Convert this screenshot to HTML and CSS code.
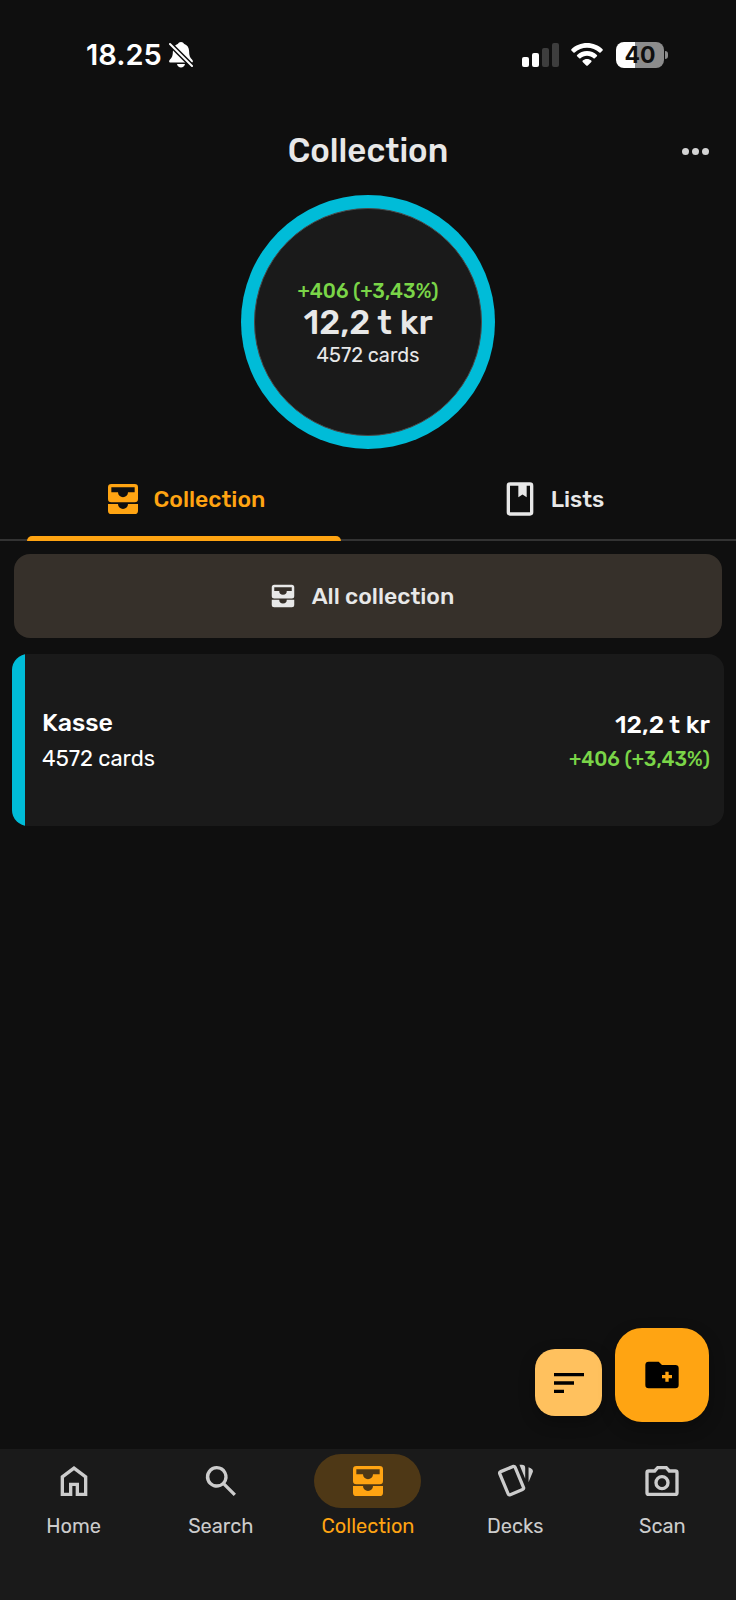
FILE: index.html
```html
<!DOCTYPE html>
<html lang="en">
<head>
<meta charset="utf-8">
<meta name="viewport" content="width=device-width, initial-scale=1">
<title>Collection</title>
<link rel="stylesheet" href="styles.css">
</head>
<body>
<svg class="sprite" aria-hidden="true">
  <symbol id="inbox" viewBox="0 0 24 24"><path fill-rule="evenodd" d="M5 3h14a2 2 0 0 1 2 2v7a2 2 0 0 1-2 2H5a2 2 0 0 1-2-2V5a2 2 0 0 1 2-2zM5 5v3h4a3 3 0 0 0 6 0h4V5zM3 15h6a3 3 0 0 0 6 0h6v4a2 2 0 0 1-2 2H5a2 2 0 0 1-2-2z"/></symbol>
</svg>
<div class="app">
  <div class="status">
    <div class="status-side">
      <span class="time">18.25</span>
      <svg class="bell" viewBox="0 0 24 26"><path d="M12 0c1.500 0 2.500.8 2.900 1.800 3.400 1.200 5.200 3.900 5.200 7.400 0 4.300.8 6.200 2.900 8.300.6.7.9 1.300.9 1.800 0 .8-.6 1.200-1.400 1.200H1.500c-.8 0-1.400-.4-1.400-1.200 0-.5.300-1.100.900-1.800C3.100 15.400 3.900 13.500 3.900 9.200 3.900 5.700 5.700 3 9.100 1.800 9.500.8 10.500 0 12 0zM8 22h8c-.4 2-2 3.500-4 3.500S8.400 24 8 22z"/><path class="slash-gap" d="M1 2 23 24"/><path class="slash" d="M1 2 23 24"/></svg>
    </div>
    <div class="status-side">
      <svg class="signal" viewBox="0 0 37 24"><rect y="14" width="7" height="10" rx="2"/><rect x="10" y="10" width="7" height="14" rx="2"/><rect class="weak" x="20" y="5" width="7" height="19" rx="2"/><rect class="weak" x="30" width="7" height="24" rx="2"/></svg>
      <svg class="wifi" viewBox="0 0 32 24"><path d="M16 0c6 0 11.500 2.300 15.600 6.200.4.400.4.900 0 1.300l-2 2c-.4.400-.9.400-1.300 0C25 6.400 20.700 4.700 16 4.700S7 6.400 3.700 9.500c-.4.400-.9.400-1.300 0l-2-2c-.4-.4-.4-.9 0-1.300C4.500 2.300 10 0 16 0zM16 8c3.800 0 7.300 1.500 9.900 3.900.4.400.4.900 0 1.300l-2.100 2.100c-.4.400-.9.400-1.300 0C20.800 13.700 18.500 12.700 16 12.700s-4.800 1-6.500 2.600c-.4.400-.9.400-1.300 0l-2.100-2.100c-.4-.4-.4-.9 0-1.300C8.700 9.500 12.200 8 16 8zM16 16c1.700 0 3.200.6 4.300 1.600.4.400.4.900 0 1.300l-3.500 3.500c-.5.500-1.100.5-1.600 0l-3.500-3.500c-.4-.4-.4-.9 0-1.300C12.800 16.600 14.300 16 16 16z"/></svg>
      <span class="battery-wrap"><span class="battery">40</span><span class="nub"></span></span>
    </div>
  </div>

  <header class="header">
    <h1 class="title">Collection</h1>
    <button class="more" type="button" aria-label="More options"><svg viewBox="0 0 27 7"><circle cx="3.500" cy="3.500" r="3.500"/><circle cx="13.500" cy="3.500" r="3.500"/><circle cx="23.500" cy="3.500" r="3.500"/></svg></button>
  </header>

  <section class="ring">
    <div class="ring-inner">
      <span class="gain">+406 (+3,43%)</span>
      <strong class="total">12,2 t kr</strong>
      <span class="count">4572 cards</span>
    </div>
  </section>

  <div class="tabs" role="tablist">
    <button class="tab tab-active" type="button" role="tab" aria-selected="true"><svg class="icon"><use href="#inbox"/></svg>Collection</button>
    <button class="tab" type="button" role="tab" aria-selected="false"><svg class="icon" viewBox="0 0 24 24"><path fill-rule="evenodd" d="M6 2h12a2 2 0 0 1 2 2v16a2 2 0 0 1-2 2H6a2 2 0 0 1-2-2V4a2 2 0 0 1 2-2zM6 4v16h12V4h-2v7l-2.500-1.700L11 11V4z"/></svg>Lists</button>
  </div>

  <main class="content">
    <button class="all" type="button"><svg class="icon icon-small"><use href="#inbox"/></svg>All collection</button>
    <a class="card" href="#kasse">
      <span class="card-col">
        <span class="card-name">Kasse</span>
        <span class="card-count">4572 cards</span>
      </span>
      <span class="card-col card-end">
        <span class="card-value">12,2 t kr</span>
        <span class="gain">+406 (+3,43%)</span>
      </span>
    </a>
  </main>

  <div class="actions">
    <button class="fab fab-small" type="button" aria-label="Sort"><svg class="icon" viewBox="0 0 24 24"><path d="M3 6h18v2H3zM3 11h12v2H3zM3 16h6v2H3z"/></svg></button>
    <button class="fab" type="button" aria-label="New folder"><svg class="icon" viewBox="0 0 24 24"><path fill-rule="evenodd" d="M4 4h6l2 2h8a2 2 0 0 1 2 2v10a2 2 0 0 1-2 2H4a2 2 0 0 1-2-2V6a2 2 0 0 1 2-2zM14 10v2h-2v2h2v2h2v-2h2v-2h-2v-2z"/></svg></button>
  </div>

  <nav class="nav">
    <a class="nav-item" href="#home"><span class="pill"><svg class="icon" viewBox="0 0 24 24"><path d="M6 19h3v-6h6v6h3v-9l-6-4.500L6 10zM4 21V9l8-6 8 6v12h-7v-6h-2v6z"/></svg></span>Home</a>
    <a class="nav-item" href="#search"><span class="pill"><svg class="icon" viewBox="0 0 24 24"><path fill-rule="evenodd" d="M9.500 3a6.500 6.500 0 0 1 5.200 10.300l6.300 6.300-1.400 1.400-6.300-6.300A6.500 6.500 0 1 1 9.500 3zm0 2a4.500 4.500 0 1 0 0 9 4.500 4.500 0 0 0 0-9z"/></svg></span>Search</a>
    <a class="nav-item nav-active" href="#collection" aria-current="page"><span class="pill"><svg class="icon"><use href="#inbox"/></svg></span>Collection</a>
    <a class="nav-item" href="#decks"><span class="pill"><svg class="icon" viewBox="0 0 24 24"><path fill-rule="evenodd" d="M11.190 2.250c-.26 0-.52.06-.77.150L3.060 5.450a2 2 0 0 0-1.090 2.600L6.930 20a2 2 0 0 0 2.600 1.100l7.370-3.050a2 2 0 0 0 1.100-2.600L13 3.500a2 2 0 0 0-1.810-1.250zm0 1.970 4.980 12.020-7.390 3.060L3.800 7.290zM14.670 2.250l3.450 8.350V4.250a2 2 0 0 0-2-2zM20.130 3.790v9.030l2.430-5.860a2 2 0 0 0-1.090-2.600z"/></svg></span>Decks</a>
    <a class="nav-item" href="#scan"><span class="pill"><svg class="icon" viewBox="0 0 24 24"><path fill-rule="evenodd" d="M20 5h-3.170L15 3H9L7.170 5H4a2 2 0 0 0-2 2v12a2 2 0 0 0 2 2h16a2 2 0 0 0 2-2V7a2 2 0 0 0-2-2zm0 14H4V7h4.050l1.830-2h4.240l1.830 2H20zM12 8.400a4.600 4.600 0 1 0 0 9.200 4.600 4.600 0 0 0 0-9.200zm0 2a2.600 2.600 0 1 1 0 5.200 2.600 2.600 0 0 1 0-5.200z"/></svg></span>Scan</a>
  </nav>
</div>
</body>
</html>
```

FILE: styles.css
```css
* {
  box-sizing: border-box;
}

body {
  margin: 0;
  background: #0f0f0f;
  color: #e8e8e8;
  font-family: Rubik, Roboto, sans-serif;
  font-size: 20px;
  line-height: 24px;
}

button {
  border: 0;
  padding: 0;
  background: none;
  color: inherit;
  font: inherit;
  cursor: pointer;
}

a {
  color: inherit;
  text-decoration: none;
}

svg {
  display: block;
  flex: none;
  fill: currentColor;
}

.sprite {
  position: absolute;
  width: 0;
  height: 0;
}

.icon {
  width: 40px;
  height: 40px;
}

.icon-small {
  width: 30px;
  height: 30px;
}

.app {
  display: flex;
  flex-direction: column;
  min-height: 100vh;
}

/* Status bar */
.status {
  display: flex;
  justify-content: space-between;
  align-items: center;
  height: 109px;
  padding: 0 68px 0 86px;
  color: #fff;
}

.status-side {
  display: flex;
  align-items: center;
}

.time {
  margin-right: 7px;
  font-family: Inter, sans-serif;
  font-size: 29px;
  font-weight: 600;
  line-height: 36px;
}

.bell {
  width: 24px;
  height: 26px;
}

.slash-gap,
.slash {
  fill: none;
  stroke-linecap: round;
}

.slash-gap {
  stroke: #0f0f0f;
  stroke-width: 5;
}

.slash {
  stroke: #fff;
  stroke-width: 2;
}

.signal {
  width: 37px;
  height: 24px;
  margin-right: 12px;
}

.weak {
  fill: #3d3d3d;
}

.wifi {
  width: 32px;
  height: 24px;
  margin-right: 13px;
}

.battery-wrap {
  display: flex;
  align-items: center;
  gap: 1px;
}

.battery {
  width: 48px;
  border-radius: 8px;
  background: linear-gradient(to right, #fff 40%, #8c8c8c 40%);
  color: #0f0f0f;
  font-family: Inter, sans-serif;
  font-size: 23px;
  font-weight: 700;
  line-height: 26px;
  text-align: center;
}

.nub {
  width: 3px;
  height: 8px;
  border-radius: 0 4px 4px 0;
  background: #8c8c8c;
}

/* Header */
.header {
  display: grid;
  grid-template-columns: 1fr auto 1fr;
  align-items: center;
  height: 86px;
  padding: 0 27px 2px;
}

.title {
  grid-column: 2;
  margin: 0;
  font-size: 33px;
  font-weight: 500;
  line-height: 40px;
}

.more {
  justify-self: end;
  padding: 16px 0;
  color: #d4d4d4;
}

.more svg {
  width: 27px;
  height: 7px;
}

/* Value ring */
.ring {
  align-self: center;
  width: 254px;
  aspect-ratio: 1;
  padding: 13px;
  border-radius: 50%;
  background: #00bcd8;
}

.ring-inner {
  display: flex;
  flex-direction: column;
  align-items: center;
  justify-content: center;
  height: 100%;
  padding-top: 2px;
  border: 1px solid #4a4a4a;
  border-radius: 50%;
  background: #1a1a1a;
}

.gain {
  color: #7ad548;
  font-size: 20px;
  font-weight: 500;
}

.total {
  font-size: 34px;
  font-weight: 500;
  line-height: 40px;
}

.count {
  font-size: 20px;
}

/* Tabs */
.tabs {
  display: grid;
  grid-template-columns: 1fr 1fr;
  height: 92px;
  padding: 0;
  background: linear-gradient(#333, #333) bottom / 100% 2px no-repeat;
}

.tab {
  display: flex;
  align-items: center;
  justify-content: center;
  gap: 11px;
  margin: 0 27px;
  padding-top: 8px;
  font-size: 23px;
  font-weight: 500;
}

.tab-active {
  position: relative;
  color: #ffa412;
}

.tab-active::after {
  content: "";
  position: absolute;
  right: 0;
  bottom: 0;
  left: 0;
  height: 5px;
  border-radius: 5px 5px 0 0;
  background: #ffa412;
}

/* Collection list */
.content {
  display: flex;
  flex-direction: column;
  gap: 16px;
  padding: 13px 12px 24px;
}

.all {
  display: flex;
  align-items: center;
  justify-content: center;
  gap: 14px;
  min-height: 84px;
  margin: 0 2px;
  padding-right: 14px;
  border-radius: 16px;
  background: #36302a;
  font-size: 23px;
  font-weight: 500;
}

.card {
  display: flex;
  align-items: center;
  justify-content: space-between;
  min-height: 172px;
  padding: 2px 14px 0 30px;
  border-radius: 16px;
  background: linear-gradient(to right, #00bcd8 13px, #1a1a1a 13px);
  color: #fff;
}

.card-col {
  display: flex;
  flex-direction: column;
  gap: 8px;
}

.card-end {
  align-items: flex-end;
}

.card-name,
.card-value {
  font-size: 25px;
  font-weight: 500;
  line-height: 28px;
}

.card-count {
  font-size: 22px;
  line-height: 28px;
}

/* Floating actions */
.actions {
  display: flex;
  align-items: center;
  justify-content: flex-end;
  gap: 13px;
  margin-top: auto;
  padding: 0 27px 27px;
}

.fab {
  display: flex;
  align-items: center;
  justify-content: center;
  width: 94px;
  height: 94px;
  border-radius: 27px;
  background: #ffa412;
  color: #000;
  box-shadow: 0 6px 16px rgba(0, 0, 0, 0.3);
}

.fab-small {
  align-self: flex-end;
  width: 67px;
  height: 67px;
  margin-bottom: 6px;
  border-radius: 20px;
  background: #ffc15e;
}

/* Bottom navigation */
.nav {
  display: grid;
  grid-template-columns: repeat(5, 1fr);
  min-height: 151px;
  padding-top: 5px;
  background: #1a1a1a;
  color: #ccc;
}

.nav-item {
  display: flex;
  flex-direction: column;
  align-items: center;
  gap: 6px;
  font-size: 20px;
}

.pill {
  display: flex;
  align-items: center;
  justify-content: center;
  width: 107px;
  height: 54px;
  border-radius: 27px;
}

.nav-active {
  color: #ffa412;
}

.nav-active .pill {
  background: #4e3816;
}
```
